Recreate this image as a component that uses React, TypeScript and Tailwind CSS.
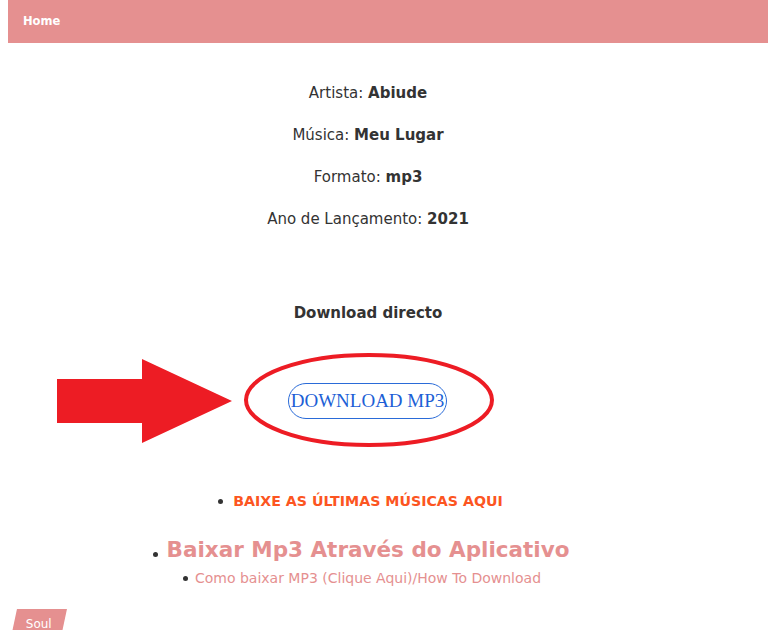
import React from 'react';

const font = { fontFamily: '"DejaVu Sans", "Open Sans", Arial, sans-serif' };

const InfoLine = ({ label, value }: { label: string; value: string }) => (
  <p className="h-[24px] leading-[24px]">
    {label}: <strong className="font-bold">{value}</strong>
  </p>
);

// marcador fora do texto, como list-style outside
const Bullet = ({ children, dot }: { children: React.ReactNode; dot: string }) => (
  <span className="relative inline-block">
    <span className={`absolute h-[5px] w-[5px] rounded-full bg-[#333] ${dot}`} />
    {children}
  </span>
);

// seta vermelha + elipse por trás do botão
const ArrowBanner = () => (
  <div className="relative mx-auto h-[100px] w-[720px]">
    <svg className="absolute inset-0" width="720" height="100" viewBox="0 0 720 100">
      <path d="M49 29 H134 V9 L224 51 L134 93 V73 H49 Z" fill="#ed1c24" />
      <ellipse cx="361" cy="50" rx="123" ry="45" fill="none" stroke="#ed1c24" strokeWidth="4" />
    </svg>
    <div className="absolute left-[280px] top-[33px]">
      <a
        href="#"
        className="flex h-[36px] w-[159px] items-center justify-center rounded-full border border-[#2a6bd8] text-[19px] text-[#1d5fd6]"
        style={{ fontFamily: '"Liberation Serif", "Times New Roman", serif' }}
      >
        DOWNLOAD MP3
      </a>
    </div>
  </div>
);

export default function App() {
  return (
    <div className="pl-[8px] bg-white min-h-[630px] text-[#333]" style={font}>
      <header className="flex h-[43px] items-center bg-[#e59090] px-[15px]">
        <span className="text-[11.5px] font-bold text-white">Home</span>
      </header>

      <main className="w-[720px] text-center text-[15px]">
        <div className="mt-[38px] flex flex-col gap-[18px]">
          <InfoLine label="Artista" value="Abiude" />
          <InfoLine label="Música" value="Meu Lugar" />
          <InfoLine label="Formato" value="mp3" />
          <InfoLine label="Ano de Lançamento" value="2021" />
        </div>

        <p className="mt-[70px] h-[24px] leading-[24px] font-bold">Download directo</p>

        <div className="mt-[25px]">
          <ArrowBanner />
        </div>

        <ul className="mt-[41px]">
          <li className="h-[20px] leading-[20px] text-[14.2px] font-bold">
            <Bullet dot="right-[calc(100%+10px)] top-[8px]">
              <a href="#" className="text-[#fc5521]">BAIXE AS ÚLTIMAS MÚSICAS AQUI</a>
            </Bullet>
          </li>
        </ul>

        <ul className="mt-[24px]">
          <li>
            <Bullet dot="right-[calc(100%+9px)] top-[17px]">
              <span className="text-[21.5px] leading-[30px] font-bold text-[#e59090]">
                Baixar Mp3 Através do Aplicativo
              </span>
            </Bullet>
            <ul className="mt-[3px]">
              <li className="h-[20px] leading-[20px] text-[14px]">
                <Bullet dot="right-[calc(100%+7px)] top-[8px]">
                  <a href="#" className="text-[#e59090]">Como baixar MP3 (Clique Aqui)/How To Download</a>
                </Bullet>
              </li>
            </ul>
          </li>
        </ul>
      </main>

      <div className="mt-[21px] pl-[6px]">
        <span className="inline-block -skew-x-12 bg-[#e59090] px-[12px] py-[2px]">
          <span className="inline-block skew-x-12 text-[12px] text-white">Soul</span>
        </span>
      </div>
    </div>
  );
}
